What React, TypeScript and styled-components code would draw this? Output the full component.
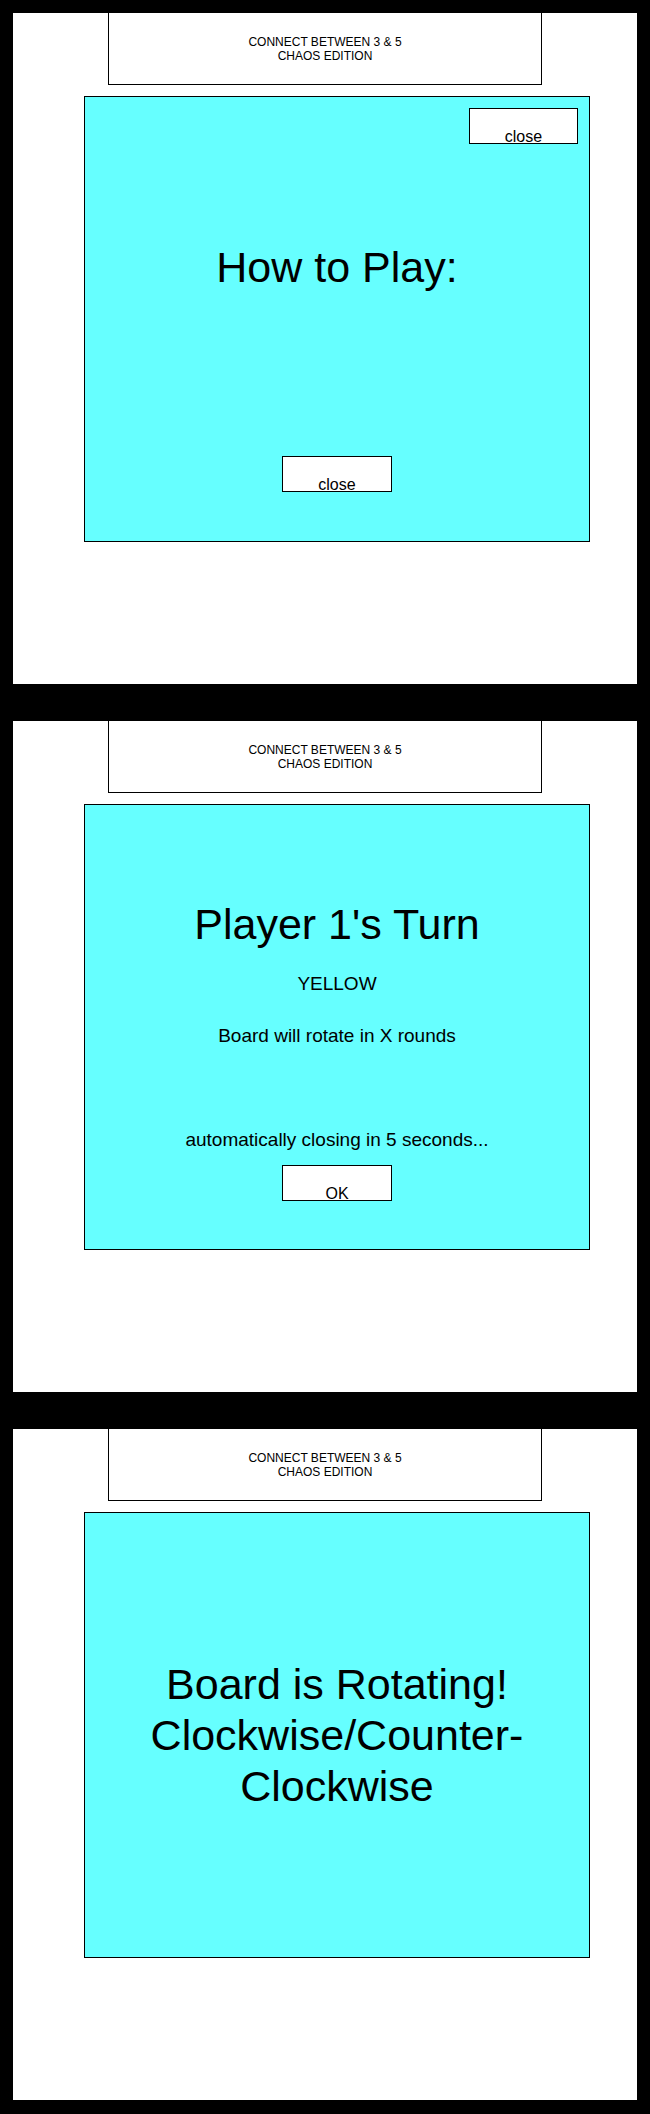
import React from 'react';
import styled, { createGlobalStyle } from 'styled-components';

const GlobalStyle = createGlobalStyle`
  html, body {
    margin: 0;
    padding: 0;
    background: #000;
  }
  body {
    font-family: "Liberation Sans", Arial, Helvetica, sans-serif;
    color: #000;
  }
`;

const Header = () => (
  <HeaderBox>
    <div>CONNECT BETWEEN 3 &amp; 5</div>
    <div>CHAOS EDITION</div>
  </HeaderBox>
);

const App = () => {
  return (
    <>
      <GlobalStyle />
      <Page>
        <Screen>
          <Header />
          <Modal variant="help">
            <CloseRow>
              <SmallButton>close</SmallButton>
            </CloseRow>
            <Title marginTop={99}>How to Play:</Title>
            <Footer>
              <FooterButton>close</FooterButton>
            </Footer>
          </Modal>
        </Screen>

        <Screen>
          <Header />
          <Modal variant="turn">
            <Title>Player 1's Turn</Title>
            <Line marginTop={24}>YELLOW</Line>
            <Line marginTop={30}>Board will rotate in X rounds</Line>
            <Countdown>automatically closing in 5 seconds...</Countdown>
            <FooterButton>OK</FooterButton>
          </Modal>
        </Screen>

        <Screen>
          <Header />
          <Modal variant="rotate">
            <RotateTitle>Board is Rotating! Clockwise/Counter-Clockwise</RotateTitle>
          </Modal>
        </Screen>
      </Page>
    </>
  );
};

const Page = styled.div`
  display: flex;
  flex-direction: column;
  gap: 37px;
  padding: 13px 13px 14px;
  background: #000;
`;

const Screen = styled.section`
  height: 671px;
  background: #fff;
  display: flex;
  flex-direction: column;
`;

const HeaderBox = styled.header`
  box-sizing: border-box;
  width: 434px;
  height: 72px;
  margin: 0 auto;
  border: 1px solid #000;
  border-top: none;
  display: flex;
  flex-direction: column;
  justify-content: center;
  align-items: center;
  font-size: 12px;
  text-align: center;
`;

const modalPadding = {
  help: '11px 11px 49px',
  turn: '95px 11px 48px',
  rotate: '0 11px',
};

const Modal = styled.div<{ variant: 'help' | 'turn' | 'rotate' }>`
  box-sizing: border-box;
  width: 506px;
  height: 446px;
  margin: 11px 0 0 71px;
  background: #66ffff;
  border: 1px solid #000;
  display: flex;
  flex-direction: column;
  align-items: center;
  justify-content: ${(p) => (p.variant === 'rotate' ? 'center' : 'flex-start')};
  padding: ${(p) => modalPadding[p.variant]};
  text-align: center;
`;

const CloseRow = styled.div`
  align-self: stretch;
  display: flex;
  justify-content: flex-end;
`;

const ButtonBase = styled.button`
  box-sizing: border-box;
  height: 36px;
  padding: 0;
  background: #fff;
  border: 1px solid #000;
  border-radius: 0;
  display: flex;
  align-items: flex-end;
  justify-content: center;
  font-family: inherit;
  font-size: 16px;
  line-height: 13px;
  color: #000;
`;

const SmallButton = styled(ButtonBase)`
  width: 109px;
`;

const FooterButton = styled(ButtonBase)`
  width: 110px;
  flex-shrink: 0;
`;

const Footer = styled.div`
  margin-top: auto;
  display: flex;
  justify-content: center;
`;

const Title = styled.h1<{ marginTop?: number }>`
  margin: ${(p) => p.marginTop ?? 0}px 0 0;
  font-size: 43px;
  font-weight: normal;
  line-height: 1.15;
`;

const RotateTitle = styled.h1`
  margin: 0;
  font-size: 43px;
  font-weight: normal;
  line-height: 51px;
`;

const Line = styled.p<{ marginTop: number }>`
  margin: ${(p) => p.marginTop}px 0 0;
  font-size: 19px;
  line-height: 1.15;
`;

const Countdown = styled.p`
  margin: auto 0 14px;
  font-size: 19px;
  line-height: 1.15;
`;

export default App;
